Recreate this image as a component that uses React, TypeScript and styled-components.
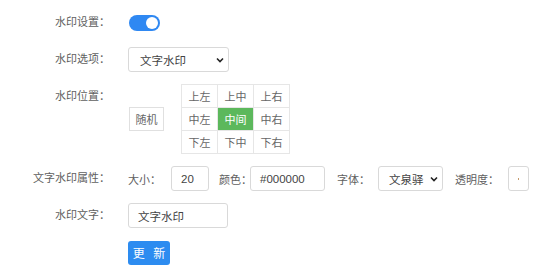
import React from "react";
import styled, { createGlobalStyle } from "styled-components";

const Global = createGlobalStyle`
  html, body { margin: 0; padding: 0; background: #fff; }
  body {
    font-family: "Liberation Sans", "Noto Sans CJK SC", sans-serif;
    color: #555;
  }
`;

const Form = styled.div`
  padding-top: 10px;
  display: flex;
  flex-direction: column;
  gap: 12px;
`;

const Row = styled.div<{ $top?: boolean }>`
  display: flex;
  align-items: ${(p) => (p.$top ? "flex-start" : "center")};
  gap: 18px;
  min-height: 25px;
`;

const Label = styled.div`
  width: 110px;
  flex: none;
  text-align: right;
  font-size: 11px;
  line-height: 25px;
  color: #606060;
`;

const Content = styled.div`
  display: flex;
  align-items: center;
`;

const Toggle = styled.div<{ $on: boolean }>`
  width: 31px;
  height: 16px;
  border-radius: 8px;
  background: ${(p) => (p.$on ? "#2f88f2" : "#ccc")};
  display: flex;
  align-items: center;
  justify-content: ${(p) => (p.$on ? "flex-end" : "flex-start")};
  padding: 0 2px;
  box-sizing: border-box;
  margin-left: 1px;
`;

const Knob = styled.span`
  width: 12px;
  height: 12px;
  border-radius: 50%;
  background: #fff;
`;

const SelectBox = styled.div<{ $w: number; $pl: number }>`
  width: ${(p) => p.$w}px;
  height: 25px;
  box-sizing: border-box;
  border: 1px solid #d9d9d9;
  border-radius: 3px;
  display: flex;
  align-items: center;
  justify-content: space-between;
  padding: 0 4px 0 ${(p) => p.$pl}px;
  font-size: 11.5px;
  color: #444;
  background: #fff;
  flex: none;
`;

const Chevron = () => (
  <svg width="8" height="6" viewBox="0 0 8 6">
    <path d="M1 1.5 L4 4.5 L7 1.5" fill="none" stroke="#222" strokeWidth="1.6" />
  </svg>
);

const PosWrap = styled.div`
  display: flex;
  align-items: center;
  gap: 17px;
`;

const RandomBtn = styled.div`
  width: 35px;
  height: 24px;
  box-sizing: border-box;
  border: 1px solid #e0e0e0;
  display: flex;
  align-items: center;
  justify-content: center;
  font-size: 11px;
  color: #666;
  margin-left: 1px;
`;

const Grid = styled.div`
  display: grid;
  grid-template-columns: repeat(3, 35px);
  grid-auto-rows: 22px;
  gap: 1px;
  background: #e6e6e6;
  border: 1px solid #e6e6e6;
`;

const Cell = styled.div<{ $active?: boolean }>`
  display: flex;
  align-items: center;
  justify-content: center;
  font-size: 11px;
  background: ${(p) => (p.$active ? "#5cb85c" : "#fff")};
  color: ${(p) => (p.$active ? "#fff" : "#666")};
`;

const InlineLabel = styled.span<{ $w: number; $ml?: number }>`
  width: ${(p) => p.$w}px;
  margin-left: ${(p) => p.$ml ?? 0}px;
  flex: none;
  font-size: 11px;
  color: #606060;
  white-space: nowrap;
`;

const TextInput = styled.div<{ $w: number; $mr?: number }>`
  width: ${(p) => p.$w}px;
  height: 25px;
  box-sizing: border-box;
  border: 1px solid #d9d9d9;
  border-radius: 3px;
  display: flex;
  align-items: center;
  padding-left: 9px;
  font-size: 11.5px;
  color: #444;
  margin-right: ${(p) => p.$mr ?? 0}px;
  flex: none;
`;

const Dot = styled.span`
  width: 1px;
  height: 2px;
  background: #c49a6c;
`;

const UpdateButton = styled.button`
  width: 42px;
  height: 24px;
  border: none;
  border-radius: 3px;
  background: #2d8cf0;
  color: #fff;
  font-family: "Noto Sans CJK SC", sans-serif;
  font-size: 12px;
  letter-spacing: 3px;
  padding: 0 0 0 3px;
`;

const positions = ["上左", "上中", "上右", "中左", "中间", "中右", "下左", "下中", "下右"];

export default function App() {
  return (
    <>
      <Global />
      <Form>
        <Row>
          <Label>水印设置：</Label>
          <Content>
            <Toggle $on>
              <Knob />
            </Toggle>
          </Content>
        </Row>
        <Row>
          <Label>水印选项：</Label>
          <Content>
            <SelectBox $w={101} $pl={11}>
              <span>文字水印</span>
              <Chevron />
            </SelectBox>
          </Content>
        </Row>
        <Row $top>
          <Label>水印位置：</Label>
          <PosWrap>
            <RandomBtn>随机</RandomBtn>
            <Grid>
              {positions.map((p) => (
                <Cell key={p} $active={p === "中间"}>
                  {p}
                </Cell>
              ))}
            </Grid>
          </PosWrap>
        </Row>
        <Row>
          <Label>文字水印属性：</Label>
          <Content>
            <InlineLabel $w={43}>大小：</InlineLabel>
            <TextInput $w={38} $mr={10}>20</TextInput>
            <InlineLabel $w={31}>颜色：</InlineLabel>
            <TextInput $w={75} $mr={12}>#000000</TextInput>
            <InlineLabel $w={41}>字体：</InlineLabel>
            <SelectBox $w={65} $pl={10}>
              <span>文泉驿</span>
              <Chevron />
            </SelectBox>
            <InlineLabel $w={53} $ml={12}>透明度：</InlineLabel>
            <TextInput $w={21}>
              <Dot />
            </TextInput>
          </Content>
        </Row>
        <Row>
          <Label>水印文字：</Label>
          <Content>
            <TextInput $w={100}>文字水印</TextInput>
          </Content>
        </Row>
        <Row>
          <Label />
          <Content>
            <UpdateButton>更 新</UpdateButton>
          </Content>
        </Row>
      </Form>
    </>
  );
}
